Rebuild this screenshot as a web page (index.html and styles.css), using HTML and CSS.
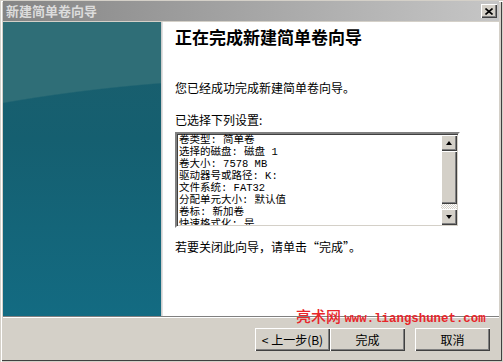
FILE: index.html
```html
<!DOCTYPE html>
<html lang="zh-CN">
<head>
    <meta charset="UTF-8">
    <title>新建简单卷向导</title>
    <link rel="stylesheet" href="styles.css">
</head>
<body>
    <div class="window">
        <div class="titlebar">
            <span class="title">新建简单卷向导</span>
            <span class="close">
                <svg width="8" height="7" viewBox="0 0 8 7"><path d="M0.5 0.5L7.5 6.5M7.5 0.5L0.5 6.5" stroke="#000" stroke-width="1.6" fill="none"/></svg>
            </span>
        </div>
        <div class="main">
            <div class="banner"></div>
            <div class="edge"></div>
            <div class="content">
                <h1>正在完成新建简单卷向导</h1>
                <p class="intro">您已经成功完成新建简单卷向导。</p>
                <p class="label">已选择下列设置:</p>
                <div class="listbox">
                    <div class="lines">
                        <div>卷类型: 简单卷</div>
                        <div>选择的磁盘: 磁盘 1</div>
                        <div>卷大小: 7578 MB</div>
                        <div>驱动器号或路径: K:</div>
                        <div>文件系统: FAT32</div>
                        <div>分配单元大小: 默认值</div>
                        <div>卷标: 新加卷</div>
                        <div>快速格式化: 是</div>
                    </div>
                    <div class="scrollbar">
                        <div class="sbtn"><i class="up"></i></div>
                        <div class="thumb"></div>
                        <div class="track"></div>
                        <div class="sbtn"><i class="down"></i></div>
                    </div>
                </div>
                <p class="hint">若要关闭此向导，请单击“完成”。</p>
            </div>
        </div>
        <div class="footer">
            <button class="btn">&lt; 上一步(B)</button>
            <button class="btn">完成</button>
            <button class="btn cancel">取消</button>
        </div>
        <div class="watermark"><b>亮术网</b> <span>www.liangshunet.com</span></div>
    </div>
</body>
</html>
```

FILE: styles.css
```css
*{
    margin: 0;
    padding: 0;
    box-sizing: border-box;
}
body{
    width: 503px;
    height: 362px;
    overflow: hidden;
    font-family: "Noto Sans CJK SC", sans-serif;
    font-size: 12px;
    color: #000;
}
.window{
    position: relative;
    width: 503px;
    height: 362px;
    display: flex;
    flex-direction: column;
    padding: 1px 4px 3px 3px;
    background-color: #d4d0c8;
    box-shadow: inset 1px 1px 0 #d4d0c8, inset 2px 2px 0 #fff, inset -1px -1px 0 #d4d0c8, inset -2px -2px 0 #404040;
}
.titlebar{
    height: 20px;
    margin-bottom: 1px;
    display: flex;
    align-items: center;
    justify-content: space-between;
    padding: 0 2px 0 3px;
    background: linear-gradient(to right, #858585, #c6c6c6);
}
.title{
    color: #dcdcdc;
    font-size: 13px;
    font-weight: bold;
    line-height: 20px;
}
.close{
    width: 16px;
    height: 14px;
    display: flex;
    align-items: center;
    justify-content: center;
    background-color: #d4d0c8;
    box-shadow: inset 1px 1px 0 #fff, inset -1px -1px 0 #404040, inset -2px -2px 0 #808080;
}
.main{
    height: 294px;
    display: flex;
}
.banner{
    width: 158px;
    background:
        radial-gradient(ellipse 800px 345px at 300px 400px, transparent 99.6%, #2f6e77 100%),
        linear-gradient(#1b5e6c 0%, #155f70 40%, #136b82 100%);
}
.edge{
    width: 2px;
    background: linear-gradient(to right, #c4c4c4, #ececec);
}
.content{
    flex: 1;
    background-color: #fff;
    padding: 5px 0 0 12px;
}
.content h1{
    font-size: 17px;
    font-weight: bold;
    line-height: 20px;
}
.intro{
    margin-top: 33px;
    line-height: 16px;
}
.label{
    margin-top: 16px;
    line-height: 16px;
}
.listbox{
    width: 285px;
    height: 96px;
    margin-top: 4px;
    display: flex;
    border-style: solid;
    border-width: 2px;
    border-color: #808080 #fff #fff #808080;
    box-shadow: inset 1px 1px 0 #404040, inset -1px -1px 0 #d4d0c8;
    padding: 0 1px 1px 1px;
}
.lines{
    flex: 1;
    overflow: hidden;
    padding-left: 1px;
    font-family: "Liberation Mono", "Noto Sans CJK SC", monospace;
    font-size: 10.5px;
    line-height: 12px;
}
.lines div{
    white-space: nowrap;
}
.scrollbar{
    width: 16px;
    display: flex;
    flex-direction: column;
    margin-top: 1px;
}
.sbtn{
    height: 16px;
    display: flex;
    align-items: center;
    justify-content: center;
    background-color: #d4d0c8;
    box-shadow: inset 1px 1px 0 #fff, inset -1px -1px 0 #404040, inset -2px -2px 0 #808080;
}
.sbtn i{
    width: 1px;
    height: 0;
    border-left: 3px solid transparent;
    border-right: 3px solid transparent;
}
.sbtn .up{
    border-bottom: 4px solid #000;
}
.sbtn .down{
    border-top: 4px solid #000;
}
.thumb{
    height: 53px;
    background-color: #d4d0c8;
    box-shadow: inset 1px 1px 0 #fff, inset -1px -1px 0 #404040, inset -2px -2px 0 #808080;
}
.track{
    flex: 1;
    background: repeating-conic-gradient(#d4d0c8 0 25%, #fff 0 50%) 0 0 / 2px 2px;
}
.hint{
    margin-top: 11px;
    line-height: 16px;
}
.footer{
    flex: 1;
    display: flex;
    justify-content: flex-end;
    align-items: flex-start;
    padding: 11px 9px 0 0;
    border-top: 1px solid #808080;
    box-shadow: inset 0 1px 0 #fff;
}
.btn{
    width: 75px;
    height: 23px;
    font-family: "Noto Sans CJK SC", sans-serif;
    font-size: 12px;
    color: #000;
    border: none;
    background-color: #d4d0c8;
    box-shadow: inset 1px 1px 0 #fff, inset -1px -1px 0 #404040, inset -2px -2px 0 #808080;
}
.cancel{
    margin-left: 10px;
}
.watermark{
    position: absolute;
    left: 296px;
    top: 307px;
    color: #e8262a;
    font-size: 15px;
    line-height: 18px;
    white-space: nowrap;
}
.watermark b{
    font-weight: 500;
}
.watermark span{
    font-family: "Liberation Mono", monospace;
    font-size: 12.4px;
    font-weight: bold;
}
```
